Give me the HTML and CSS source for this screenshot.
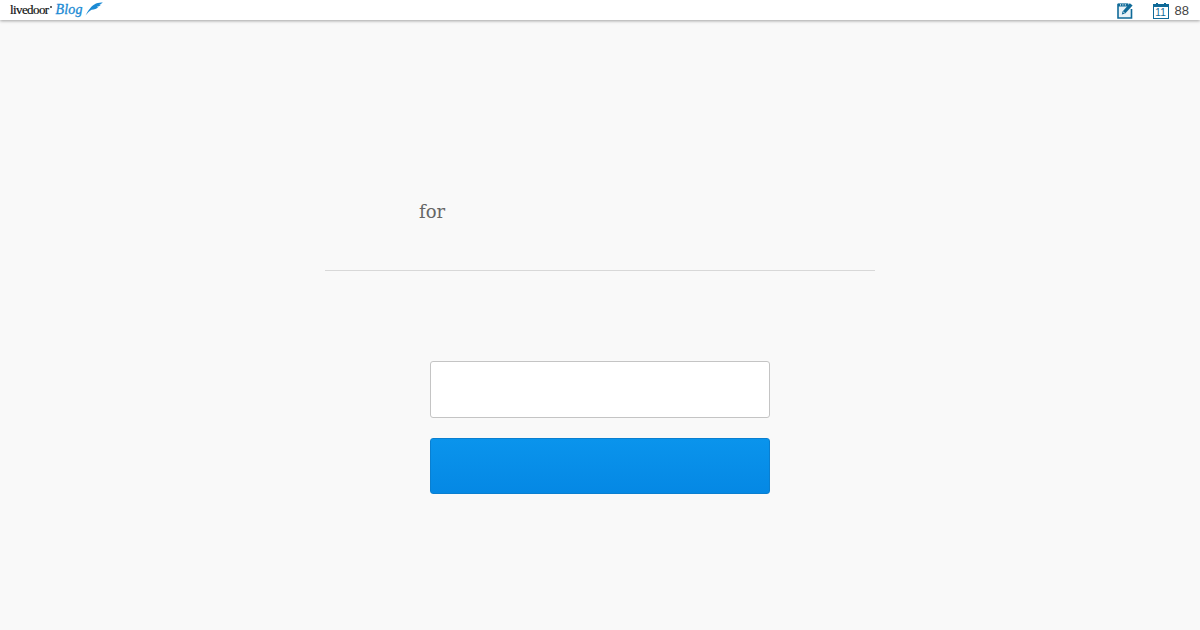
FILE: index.html
```html
<!DOCTYPE html>
<html lang="en">
<head>
  <meta charset="UTF-8">
  <title>livedoor Blog</title>
  <link rel="stylesheet" href="styles.css">
</head>
<body>

  <!-- Top bar -->
  <header class="topbar">
    <a class="logo" href="#">
      <span class="logo-name">livedoor</span><span class="logo-dot"></span>
      <span class="logo-blog">Blog</span>
      <svg class="logo-wing" width="18" height="14" viewBox="0 0 18 14">
        <path d="M0.5 13.5C3 8.5 6.5 3.5 11 1.5C13.5 0.6 16 0.6 17.8 0.5C16.6 1.6 15.6 2.2 14.2 2.6C15 2.8 15.4 2.8 16 2.7C14.8 4 13.4 4.6 11.8 4.8C12.4 5.1 12.8 5.2 13.4 5.1C11.6 6.9 9.4 7.6 6.6 7.8C4.6 9 2.6 11 0.5 13.5Z" fill="#1a8ad4"/>
      </svg>
    </a>
    <div class="tools">
      <a class="tool" href="#">
        <svg width="16" height="17" viewBox="0 0 16 17">
          <path d="M11 2.5H1V16H14.5V7" fill="#eaf3f8" stroke="#0f6a98" stroke-width="1.6"/>
          <path d="M1 1.5H11.5V4.5H1Z" fill="#0f6a98"/>
          <path d="M3 2.2H4V3.6H3ZM5.4 2.2H6.4V3.6H5.4ZM7.8 2.2H8.8V3.6H7.8Z" fill="#fff"/>
          <path d="M4.8 12.6L5.6 9.4L12.8 1.2L15.6 3.6L8.2 11.6Z" fill="#0f6a98"/>
          <path d="M6 9.8L7.8 11.2" stroke="#fff" stroke-width="0.8"/>
        </svg>
      </a>
      <a class="tool tool-date" href="#">
        <span class="calendar">
          <span class="calendar-ring"></span>
          <span class="calendar-ring calendar-ring-right"></span>
          <span class="calendar-day">11</span>
        </span>
        <span class="count">88</span>
      </a>
    </div>
  </header>

  <section class="main">
    <h1 class="heading">for</h1>
    <form class="login">
      <input class="login-input" type="text">
      <button class="login-button" type="submit"></button>
    </form>
  </section>

</body>
</html>
```

FILE: styles.css
```css
/* General body styling */
body {
  margin: 0;
  height: 630px;
  overflow: hidden;
  background-color: #f9f9f9;
  font-family: 'Liberation Sans', Arial, sans-serif;
}

/* Top bar */
.topbar {
  display: flex;
  justify-content: space-between;
  align-items: center;
  height: 20px;
  padding: 0 11px 0 10px;
  background-color: #fff;
  box-shadow: 0 1px 3px rgba(0, 0, 0, 0.35);
}

.logo {
  display: flex;
  align-items: center;
  text-decoration: none;
}

.logo-name {
  font-family: 'Liberation Serif', serif;
  font-size: 13px;
  letter-spacing: -0.6px;
  color: #111;
  -webkit-text-stroke: 0.2px #111;
}

.logo-dot {
  width: 2px;
  height: 2px;
  margin: 0 0 6px 1px;
  background-color: #666;
}

.logo-blog {
  margin-left: 4px;
  font-family: 'Liberation Serif', serif;
  font-size: 14px;
  font-style: italic;
  letter-spacing: 0.2px;
  color: #1a8ad4;
  -webkit-text-stroke: 0.3px #1a8ad4;
}

.logo-wing {
  margin-left: 2px;
  margin-top: -3px;
}

.tools {
  display: flex;
  align-items: center;
  gap: 20px;
}

.tool {
  display: flex;
  align-items: center;
  gap: 6px;
  text-decoration: none;
}

/* Calendar icon */
.calendar {
  position: relative;
  box-sizing: border-box;
  display: flex;
  justify-content: center;
  align-items: flex-end;
  width: 16px;
  height: 15px;
  margin-top: 2px;
  border: 1px solid #0f6a98;
  border-top: 3px solid #0f6a98;
  background-color: #fff;
}

/* Rings stick out over the top band */
.calendar-ring {
  position: absolute;
  top: -4px;
  left: 2px;
  width: 2px;
  height: 3px;
  background-color: #0f6a98;
}

.calendar-ring-right {
  left: auto;
  right: 2px;
}

.calendar-day {
  font-size: 10px;
  line-height: 11px;
  color: #0f6a98;
}

.count {
  font-size: 13px;
  color: #444;
}

/* Center column */
.main {
  width: 550px;
  margin: 0 auto;
}

.heading {
  margin: 0;
  padding: 180px 0 47px 94px;
  border-bottom: 1px solid #d8d8d8;
  font-family: 'DejaVu Serif', serif;
  font-size: 18px;
  font-weight: normal;
  line-height: 23px;
  color: #666;
}

.login {
  display: flex;
  flex-direction: column;
  gap: 20px;
  width: 340px;
  margin: 90px auto 0;
}

.login-input {
  box-sizing: border-box;
  height: 57px;
  border: 1px solid #c4c4c4;
  border-radius: 3px;
  background-color: #fff;
}

.login-button {
  height: 56px;
  border: 1px solid #0a7fd0;
  border-radius: 3px;
  background: linear-gradient(#0a94ec, #0588e4);
}
```
